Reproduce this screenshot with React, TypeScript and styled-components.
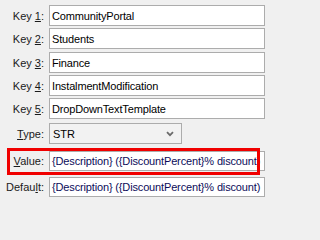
import React from 'react';
import styled, { createGlobalStyle } from 'styled-components';

const GlobalStyle = createGlobalStyle`
  html, body {
    margin: 0;
    padding: 0;
    background: #f0f0f0;
  }
  body {
    font-family: 'Liberation Sans', Arial, sans-serif;
    font-size: 11px;
    color: #000;
  }
`;

type Field = {
  label: React.ReactNode;
  value: string;
  top: number;
};

const keys: Field[] = [
  { label: <>Key <u>1</u>:</>, value: 'CommunityPortal', top: 5 },
  { label: <>Key <u>2</u>:</>, value: 'Students', top: 2 },
  { label: <>Key <u>3</u>:</>, value: 'Finance', top: 3 },
  { label: <>Key <u>4</u>:</>, value: 'InstalmentModification', top: 2 },
  { label: <>Key <u>5</u>:</>, value: 'DropDownTextTemplate', top: 2 },
];

const template = '{Description} ({DiscountPercent}% discount)';

const App = () => {
  return (
    <>
      <GlobalStyle />
      <Form>
        {keys.map((k, i) => (
          <Row key={i} $top={k.top}>
            <Label>{k.label}</Label>
            <TextBox $h={21}>{k.value}</TextBox>
          </Row>
        ))}
        <Row $top={4}>
          <Label>
            <u>T</u>ype:
          </Label>
          <Select>
            <span>STR</span>
            <svg width="8" height="6" viewBox="0 0 8 6">
              <path d="M1 1.2 L4 4.2 L7 1.2" fill="none" stroke="#6b6b6b" strokeWidth="1.8" />
            </svg>
          </Select>
        </Row>
        <Row $top={7}>
          <Highlight />
          <Label>
            <u>V</u>alue:
          </Label>
          <TextBox $h={20} $navy>{template}</TextBox>
        </Row>
        <Row $top={6}>
          <Label>
            Defau<u>l</u>t:
          </Label>
          <TextBox $h={20} $navy>{template}</TextBox>
        </Row>
      </Form>
    </>
  );
};

export default App;

const Form = styled.div`
  width: 266px;
  height: 202px;
  display: flex;
  flex-direction: column;
  overflow: hidden;
`;

const Row = styled.div<{ $top: number }>`
  position: relative;
  margin-top: ${(p) => p.$top}px;
  display: grid;
  grid-template-columns: 44px 216px;
  column-gap: 5px;
  align-items: center;
`;

const Label = styled.div`
  text-align: right;
  white-space: nowrap;
  color: #1a1a1a;
  u {
    text-underline-offset: 1px;
  }
`;

const TextBox = styled.div<{ $h: number; $navy?: boolean }>`
  box-sizing: border-box;
  height: ${(p) => p.$h}px;
  background: #fff;
  border: 1px solid #acacac;
  padding: 0 2px;
  display: flex;
  align-items: center;
  white-space: nowrap;
  overflow: hidden;
  letter-spacing: -0.15px;
  color: ${(p) => (p.$navy ? '#0c0c5a' : '#000')};
`;

const Select = styled.div`
  box-sizing: border-box;
  width: 133px;
  height: 21px;
  background: #f2f2f2;
  border: 1px solid #acacac;
  padding: 0 7px 0 3px;
  display: flex;
  align-items: center;
  justify-content: space-between;
  svg {
    margin-top: 1px;
  }
`;

const Highlight = styled.div`
  position: absolute;
  left: 7px;
  top: -3px;
  width: 253px;
  height: 27px;
  box-sizing: border-box;
  border: 3px solid #f00000;
  pointer-events: none;
  z-index: 1;
`;
